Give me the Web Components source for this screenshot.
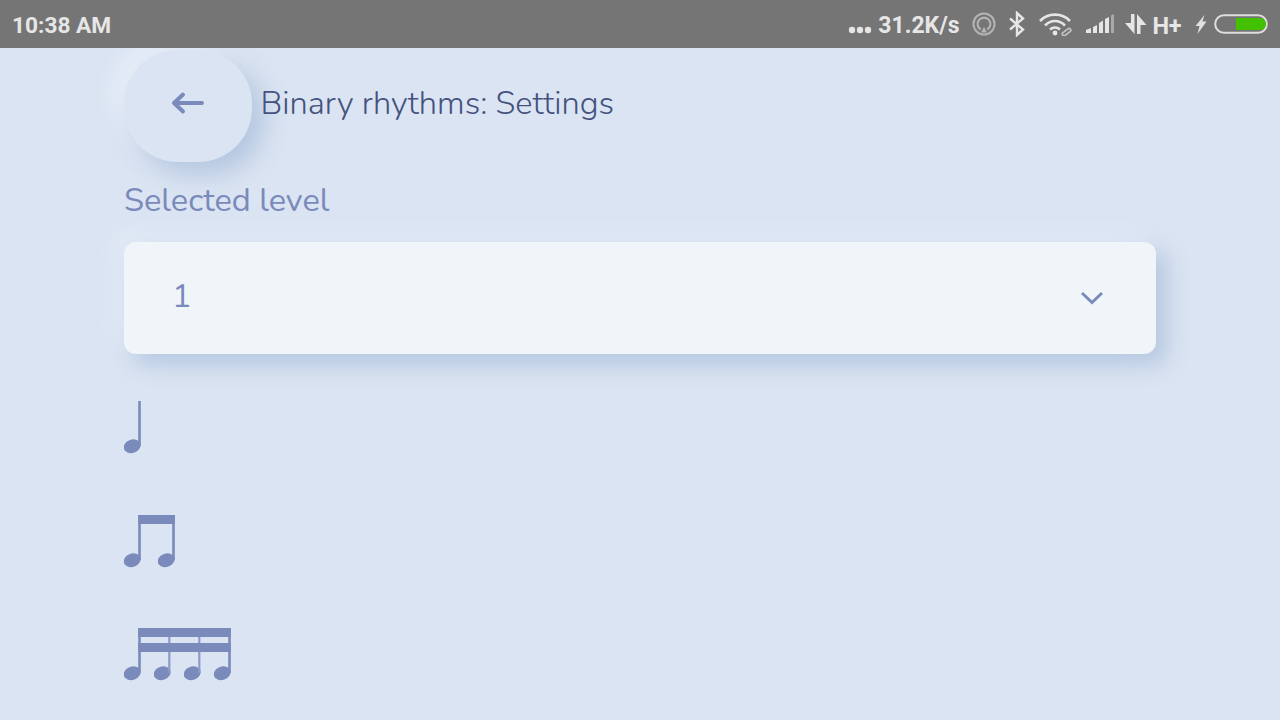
<!DOCTYPE html>
<html><head><meta charset="utf-8"><title>Binary rhythms: Settings</title>
<style>
html,body{margin:0;padding:0;height:100%;overflow:hidden}
body{background:#dae4f2;width:1280px;height:720px;font-family:"Nunito","Lato","Noto Sans",sans-serif}
</style></head><body>
<status-bar></status-bar>
<settings-page>
  <back-header>Binary rhythms: Settings</back-header>
  <section-label>Selected level</section-label>
  <level-select value="1"></level-select>
  <rhythm-list></rhythm-list>
</settings-page>
<script>
function def(name, html, init){
  customElements.define(name, class extends HTMLElement{
    constructor(){super();this.attachShadow({mode:'open'}).innerHTML=html;}
    connectedCallback(){ if(init) init.call(this); }
  });
}
def('status-bar',`<style>
:host{display:flex;position:relative;z-index:2;height:48px;background:#757575;color:#e6e6e6;align-items:center;justify-content:space-between;padding:0 12px;font:700 22.700px/28px Roboto,sans-serif;box-sizing:border-box}
.r{display:flex;align-items:center}
.tx{padding-top:3px}
svg{display:block}
</style>
<div class="tx">10:38 AM</div>
<div class="r">
<svg width="24" height="10" viewBox="0 0 24 10" style="margin-top:12px"><g fill="#e6e6e6"><circle cx="4" cy="5" r="3.200"/><circle cx="12" cy="5" r="3.200"/><circle cx="20" cy="5" r="3.200"/></g></svg>
<span class="tx" style="margin-left:6px;font-size:23px">31.2K/s</span>
<svg width="24" height="24" viewBox="0 0 24 24" style="margin-left:12px"><g fill="none" stroke="#b4b4b4"><circle cx="12" cy="12" r="10.500" stroke-width="2"/><path d="M8.800 17.500A6.400 6.400 0 1 1 15.200 17.500" stroke-width="2.200"/></g><path d="M12 15l3 5.500H9z" fill="#b4b4b4"/></svg>
<svg width="18" height="26" viewBox="0 0 18 26" style="margin-left:12px"><path d="M2 7.500 15 18.500 9 24V2l6 5.500L2 18.500" fill="none" stroke="#e6e6e6" stroke-width="2.400"/></svg>
<svg width="34" height="24" viewBox="0 0 34 24" style="margin-left:13px"><g fill="none" stroke="#e6e6e6" stroke-width="2.600"><path d="M1 9C9 .5 23 .5 31 9"/><path d="M6 13.500C12 7.500 20 7.500 26 13.500"/><path d="M11 17.500c3-2.600 7-2.600 10 0"/></g><circle cx="16" cy="21" r="2.400" fill="#e6e6e6"/><path d="M22 24l11-8" stroke="#757575" stroke-width="8"/><path d="M25 22l5-3.800" stroke="#c8c8c8" stroke-width="5" stroke-linecap="round"/><path d="M25 22l5-3.800" stroke="#757575" stroke-width="2" stroke-linecap="round"/></svg>
<svg width="30" height="20" viewBox="0 0 30 20" style="margin-left:12px"><g fill="#e6e6e6"><path d="M1 19v-3l5-2v5z"/><path d="M8 19v-6l4-2v8z"/><path d="M14 19V9l4-2.500V19z"/><path d="M20 19V5l4-2v16z"/></g><path d="M26 19V1.500l3-1.500v19z" fill="#a8a8a8"/></svg>
<svg width="22" height="22" viewBox="0 0 22 22" style="margin-left:10px"><path d="M6 1h3.500v20L0 10h6zM12 21V1l9.500 11H15.500v9z" fill="#e6e6e6"/></svg>
<span class="tx" style="font-size:23.500px;line-height:26px;margin-left:6px;letter-spacing:-.5px">H+</span>
<svg width="12" height="19" viewBox="0 0 12 19" style="margin-left:14px"><path d="M9.500 0 .5 11H4.500L2.500 19 11.500 6.500H7.500z" fill="#e0e0e0"/></svg>
<svg width="54" height="20" viewBox="0 0 54 20" style="margin-left:7px"><rect x="1.200" y="1.200" width="51.600" height="17.600" rx="8.800" fill="none" stroke="#dedede" stroke-width="2"/><path d="M22 4h24a6 6 0 0 1 0 12H22z" fill="#43c000"/></svg>
</div>`);
def('settings-page',`<style>:host{display:flex;flex-direction:column;padding:2px 124px 0;color:#7a8aba}</style><slot></slot>`);
def('back-header',`<style>
:host{display:flex;align-items:flex-start;gap:8.500px;color:#45527f;font:300 32.600px/40px "Nunito","Lato",sans-serif}
button{width:128px;height:112px;border:0;padding:0 0 6px;box-sizing:border-box;border-radius:54px;background:#dae4f2;box-shadow:12px 12px 24px rgba(171,191,219,.8),-12px -12px 24px rgba(236,242,250,.7);display:flex;align-items:center;justify-content:center}
span{margin-top:34px}
</style><button aria-label="Back"><svg width="34" height="24" viewBox="0 0 34 24"><path d="M3 12h28M12 3.500 3 12l9 8.500" fill="none" stroke="#7a8aba" stroke-width="4" stroke-linecap="round" stroke-linejoin="round"/></svg></button><span><slot></slot></span>`);
def('section-label',`<style>:host{display:block;margin-top:19px;height:61px;color:#7a8aba;font:400 32.600px/40px "Nunito","Lato",sans-serif}</style><slot></slot>`);
def('level-select',`<style>
:host{display:flex;align-items:center;justify-content:space-between;height:112px;background:#f0f5f9;border-radius:12px;box-shadow:10px 10px 22px rgba(171,191,219,.8),-10px -10px 22px rgba(232,239,249,.7);padding:0 52px 2px 48px;box-sizing:border-box;color:#7a8aba;font:400 32.600px/40px "Nunito","Lato",sans-serif}
svg{display:block;margin-top:2px}
</style><span id="v"></span><svg width="24" height="14" viewBox="0 0 24 14"><path d="M2 2 12 11.500 22 2" fill="none" stroke="#7a8aba" stroke-width="3"/></svg>`,
function(){this.shadowRoot.getElementById('v').textContent=this.getAttribute('value');});
def('rhythm-note',`<style>:host{display:block;height:52px}svg{display:block;overflow:visible;fill:#7a8aba}</style><svg id="s" height="52"></svg>`,
function(){
  const n=+this.getAttribute('count'), beams=+this.getAttribute('beams'), step=n>2?30:34;
  const s=this.shadowRoot.getElementById('s'); const w=17+(n-1)*step;
  s.setAttribute('width',w); s.setAttribute('viewBox','0 0 '+w+' 52');
  let h='';
  for(let i=0;i<n;i++){const x=i*step;
    h+=`<ellipse cx="${x+8.2}" cy="45.200" rx="8.700" ry="6.700" transform="rotate(-20 ${x+8.2} 45.200)"/><rect x="${x+14.200}" y="0" width="${(i==0||i==n-1)?2.6:2.2}" height="45" fill="${i==0||i==n-1?'#7a8aba':'#8c9bc8'}"/>`;}
  if(beams>=1) h+=`<rect x="14.200" y="0" width="${w-14.200}" height="9"/>`;
  if(beams>=2) h+=`<rect x="14.200" y="15" width="${w-14.200}" height="9"/>`;
  s.innerHTML=h;
});
def('rhythm-list',`<style>:host{display:flex;flex-direction:column;gap:61.500px;margin-top:47.300px}</style>
<rhythm-note count="1" beams="0"></rhythm-note><rhythm-note count="2" beams="1"></rhythm-note><rhythm-note count="4" beams="2"></rhythm-note>`);
</script>
</body></html>
